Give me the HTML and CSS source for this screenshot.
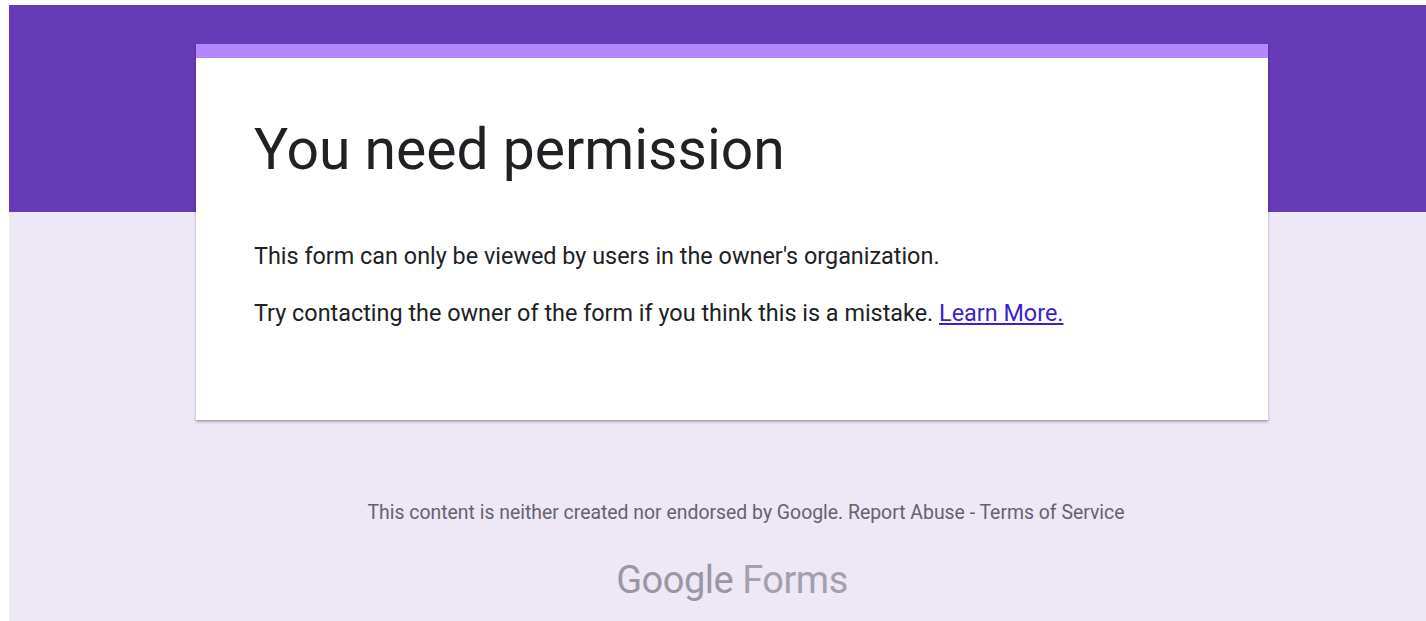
FILE: index.html
```html
<!DOCTYPE html>
<html lang="en">
<head>
<meta charset="utf-8">
<title>You need permission</title>
<link rel="stylesheet" href="styles.css">
</head>
<body>
<div class="frame">
  <div class="page">
    <div class="card">
      <div class="card-accent"></div>
      <div class="card-body">
        <h1 class="title">You need permission</h1>
        <p class="text">This form can only be viewed by users in the owner's organization.</p>
        <p class="text">Try contacting the owner of the form if you think this is a mistake. <a class="link" href="#">Learn More.</a></p>
      </div>
    </div>
    <div class="footer">
      <p class="disclaimer">This content is neither created nor endorsed by Google. Report Abuse - Terms of Service</p>
      <div class="brand"><span class="brand-google">Google</span> <span class="brand-forms">Forms</span></div>
    </div>
  </div>
</div>
</body>
</html>
```

FILE: styles.css
```css
html, body {
  margin: 0;
  padding: 0;
  background: #ffffff;
  height: 100%;
  overflow: hidden;
}

/* white gutter around the page */
.frame {
  padding: 5px 0 0 9px;
  height: 100%;
  box-sizing: border-box;
}

.page {
  height: 100%;
  background: linear-gradient(to bottom, #673ab7 0, #673ab7 207px, #ede7f6 207px);
  font-family: Roboto, "Liberation Sans", Arial, sans-serif;
  display: flex;
  flex-direction: column;
  padding-top: 39px;
  box-sizing: border-box;
}

.card {
  width: 1072px;
  margin-left: 187px;
  background: #ffffff;
  box-shadow: 0 2px 3px rgba(0, 0, 0, 0.25), 0 1px 1px rgba(0, 0, 0, 0.1);
}

.card-accent {
  height: 14px;
  background: #b388ff;
}

.card-body {
  padding: 60px 58px 0 58px;
  height: 362px;
  box-sizing: border-box;
}

.title {
  margin: 0;
  font-size: 57px;
  font-weight: 400;
  line-height: 64px;
  color: #202124;
}

.text {
  margin: 0;
  font-size: 23.4px;
  line-height: 30px;
  color: #202124;
}

.title + .text {
  margin-top: 59px;
}

.text + .text {
  margin-top: 27px;
}

.link {
  color: #3b1fd0;
  text-decoration: underline;
}

.footer {
  margin-left: 187px;
  width: 1072px;
  display: flex;
  flex-direction: column;
  align-items: center;
}

.disclaimer {
  margin: 81px 0 0 28px;
  font-size: 19.4px;
  line-height: 24px;
  color: #66626c;
}

.brand {
  margin-top: 35px;
  font-size: 38px;
  line-height: 40px;
  color: #9a96a3;
  letter-spacing: -0.5px;
}

.brand-forms {
  color: #a3a0ab;
}
```
